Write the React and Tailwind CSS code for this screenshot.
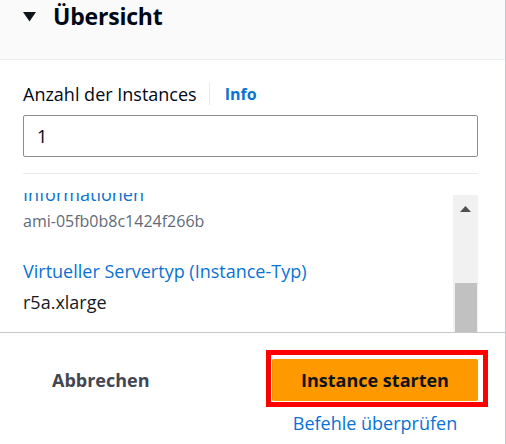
export default function App() {
  return (
    <div className="w-[506px] h-[444px] overflow-hidden bg-white border-r border-[#c6c6cd] font-['Open_Sans',sans-serif] text-[#000716]">
      {/* Section header */}
      <div className="h-[60px] bg-[#fafafa] border-b border-[#e9ebed] flex items-start pl-[23px] pt-[1px]">
        <div className="flex items-center gap-[17px] h-[30px]">
          <svg width="13" height="10" viewBox="0 0 13 10" className="mt-[1px]">
            <path d="M0 0 H13 L6.5 9.5 Z" fill="#0f141a" />
          </svg>
          <h2 className="text-[23px] font-bold leading-[30px] tracking-[-0.2px]">Übersicht</h2>
        </div>
      </div>

      {/* Body */}
      <div className="pl-[23px] pr-[27px] pt-[22px]">
        <div className="flex items-center h-[24px]">
          <span className="text-[18px] leading-[24px] text-[#000716]">Anzahl der Instances</span>
          <span className="w-px h-[22px] bg-[#e9ebed] ml-[12px] mr-[15px]"></span>
          <span className="text-[16px] font-bold text-[#0972d3]">Info</span>
        </div>
        <div className="mt-[9px] h-[42px] border border-[#8c8c94] rounded-[2px] flex items-center px-[13px] text-[18px]">
          1
        </div>
        <div className="mt-[16px] h-px bg-[#e9ebed]"></div>

        {/* Scroll region */}
        <div className="mt-[19px] h-[139px] flex">
          <div className="flex-1 overflow-hidden">
            <div className="-mt-[11px]">
              <div className="text-[18px] leading-[25px] text-[#0972d3]">Informationen</div>
              <div className="text-[16px] leading-[22px] text-[#5f6b7a] mt-[3px]">ami-05fb0b8c1424f266b</div>
              <div className="text-[18px] leading-[25px] text-[#0972d3] mt-[27px]">Virtueller Servertyp (Instance-Typ)</div>
              <div className="text-[18px] leading-[25px] text-[#16191f] mt-[6px]">r5a.xlarge</div>
            </div>
          </div>
          <div className="w-[25px] mt-[2px] bg-[#f1f1f1] flex flex-col items-center">
            <svg width="11" height="6" viewBox="0 0 11 6" className="mt-[11px]">
              <path d="M0 6 L5.5 0 L11 6 Z" fill="#505050" />
            </svg>
            <div className="mt-[71px] w-[22px] flex-1 bg-[#c1c1c1]"></div>
          </div>
        </div>
      </div>

      {/* Footer */}
      <div className="border-t border-[#c6c6cd] flex items-start pl-[52px] pr-[17px] pt-[17px]">
        <button className="mt-[18px] text-[18px] font-bold text-[#424650] leading-[24px]">Abbrechen</button>
        <div className="ml-auto w-[222px] flex flex-col">
          <div className="border-[5px] border-[#ff0000] pt-[4px] pl-[1px] pr-[5px] pb-[1px]">
            <button className="w-[206px] h-[42px] bg-[#ff9900] rounded-[2px] text-[18px] font-bold text-[#0f141a]">
              Instance starten
            </button>
          </div>
          <a className="mt-[4px] w-[206px] ml-[6px] text-center text-[18px] leading-[25px] text-[#0972d3]">Befehle überprüfen</a>
        </div>
      </div>
    </div>
  );
}
